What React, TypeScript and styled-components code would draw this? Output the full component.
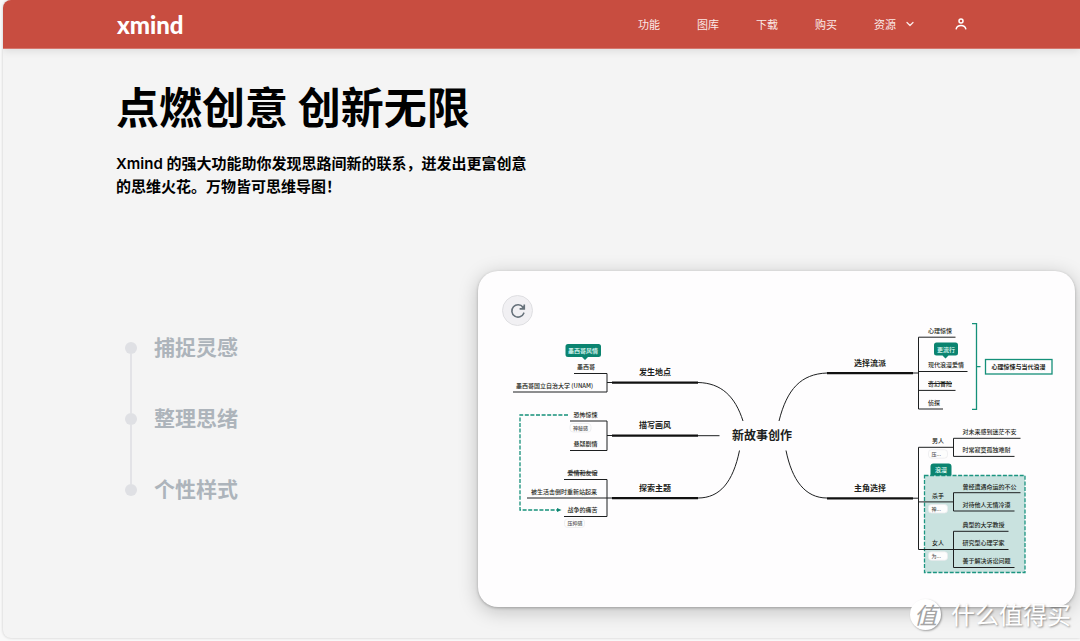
import React from "react";
import styled, { createGlobalStyle } from "styled-components";

const cjk = '"Noto Sans CJK SC", "Noto Sans", sans-serif';
const green = "#0b8470";
const ink = "#1d1f20";

const GlobalStyle = createGlobalStyle`
  *, *::before, *::after { box-sizing: border-box; }
  body {
    margin: 0;
    background: #f9f9f9;
    font-family: ${cjk};
    color: #000;
  }
`;

const Page = styled.div`
  display: flex;
  min-height: 100vh;
  padding: 0 0 3px 3px;
  overflow: hidden;
  position: relative;
`;

const Panel = styled.div`
  flex: 1;
  min-width: 0;
  display: flex;
  flex-direction: column;
  background: #f4f4f4;
  border-radius: 8px 0 0 8px;
  box-shadow: 0 0 3px rgba(0, 0, 0, 0.2);
  overflow: hidden;
`;

const Header = styled.header`
  display: flex;
  align-items: center;
  justify-content: space-between;
  height: 49px;
  padding: 0 113px;
  background: #c84d40;
  border-bottom: 1px solid #d5776d;
  box-shadow: 0 2px 8px rgba(0, 0, 0, 0.1);
`;

const Logo = styled.a`
  padding: 2px 0 0 1px;
  color: #fff;
  font: 900 24px/28px Lato, sans-serif;
  text-decoration: none;
`;

const Nav = styled.nav`
  display: flex;
  align-items: center;
  gap: 37px;
`;

const NavLink = styled.a`
  color: #fbe9e7;
  font-size: 11px;
  line-height: 16px;
  text-decoration: none;
`;

const NavMenu = styled.button`
  display: flex;
  align-items: center;
  gap: 10px;
  padding: 0;
  border: 0;
  background: none;
  color: #fbe9e7;
  font-family: inherit;
  font-size: 11px;
  line-height: 16px;
`;

const IconButton = styled.button`
  display: flex;
  padding: 0;
  margin-left: 4px;
  border: 0;
  background: none;
  color: #fff;
`;

const Main = styled.main`
  flex: 1;
  padding: 24px 5px 31px 113px;
`;

const Title = styled.h1`
  margin: 0;
  font-size: 43px;
  line-height: 64px;
  font-weight: 700;
`;

const Lead = styled.p`
  max-width: 424px;
  margin: 15px 0 0;
  font-family: Inter, ${cjk};
  font-size: 15px;
  line-height: 23px;
  font-weight: 600;
`;

const Showcase = styled.section`
  display: grid;
  grid-template-columns: 362px minmax(0, 1fr);
  margin-top: 73px;
`;

const Steps = styled.ol`
  margin: 61px 0 0;
  padding: 0 0 0 9px;
  list-style: none;
`;

const Step = styled.li`
  position: relative;
  display: flex;
  align-items: center;
  gap: 17px;
  height: 32px;
  margin-bottom: 39px;
  color: #adb4bb;
  font-size: 21px;
  line-height: 28px;
  font-weight: 700;

  &::before {
    content: "";
    width: 12px;
    height: 12px;
    border-radius: 50%;
    background: #dfe0e4;
  }

  &:not(:last-child)::after {
    content: "";
    position: absolute;
    left: 5px;
    top: 22px;
    width: 2px;
    height: 59px;
    background: #e3e3e7;
  }
`;

const StepName = styled.span`
  padding-bottom: 4px;
`;

const Card = styled.div`
  position: relative;
  border-radius: 20px;
  background: #fefdfe;
  box-shadow: 0 1px 3px rgba(0, 0, 0, 0.25), 0 4px 20px rgba(0, 0, 0, 0.22);
`;

const Replay = styled.button`
  position: absolute;
  left: 24px;
  top: 24px;
  display: grid;
  place-items: center;
  width: 31px;
  height: 31px;
  padding: 0;
  border: 1px solid #dfdfe2;
  border-radius: 50%;
  background: #f1f0f3;
  color: #66717a;
`;

const Map = styled.svg`
  display: block;
  width: 100%;
  height: auto;
`;

const Label = styled.text<{ $size?: number; $bold?: boolean; $color?: string }>`
  font-family: ${cjk};
  font-size: ${(p) => p.$size ?? 6}px;
  font-weight: ${(p) => (p.$bold ? 700 : 500)};
  fill: ${(p) => p.$color ?? ink};
`;

const Watermark = styled.div`
  position: absolute;
  right: 9px;
  bottom: 9px;
  display: flex;
  align-items: center;
  gap: 10px;
  color: #fff;
  font-size: 24px;
  line-height: 36px;
  text-shadow: 1px 1px 2px rgba(0, 0, 0, 0.4);
`;

const Seal = styled.span`
  display: grid;
  place-items: center;
  width: 31px;
  height: 31px;
  border-radius: 50%;
  background: #fff;
  box-shadow: 1px 1px 2px rgba(0, 0, 0, 0.35);
  color: #a4a4a4;
  font-size: 23px;
  line-height: 31px;
  font-style: italic;
  text-shadow: none;
`;

type Leaf = { text: string; x: number; y: number; strike?: boolean };

const branches = [
  { text: "发生地点", x: 639, y: 375 },
  { text: "描写画风", x: 639, y: 428 },
  { text: "探索主题", x: 639, y: 490.5 },
  { text: "选择流派", x: 854, y: 365.5 },
  { text: "主角选择", x: 854, y: 490.5 },
];

const leaves: Leaf[] = [
  { text: "墨西哥", x: 577, y: 368.5 },
  { text: "墨西哥国立自治大学 (UNAM)", x: 516, y: 387.5 },
  { text: "恐怖惊悚", x: 573.5, y: 416.5 },
  { text: "悬疑剧情", x: 573.5, y: 446 },
  { text: "爱情和友谊", x: 567.5, y: 475, strike: true },
  { text: "被生活击倒时重新站起来", x: 531, y: 493.5 },
  { text: "战争的痛苦", x: 567.5, y: 512.3 },
  { text: "心理惊悚", x: 928, y: 332.5 },
  { text: "现代浪漫爱情", x: 928, y: 367 },
  { text: "奇幻冒险", x: 928, y: 385.7, strike: true },
  { text: "侦探", x: 928, y: 404.5 },
  { text: "男人", x: 932, y: 442.8 },
  { text: "对未来感到迷茫不安", x: 962.5, y: 433.8 },
  { text: "时常寂寞孤独难耐", x: 962.5, y: 452 },
  { text: "杀手", x: 932, y: 497.5 },
  { text: "曾经遭遇命运的不公", x: 962.5, y: 488.6 },
  { text: "对待他人无情冷漠", x: 962.5, y: 506.8 },
  { text: "女人", x: 932, y: 545.2 },
  { text: "典型的大学教授", x: 962.5, y: 526.8 },
  { text: "研究型心理学家", x: 962.5, y: 545.2 },
  { text: "善于解决诉讼问题", x: 962.5, y: 563.4 },
];

const notes = [
  { text: "神秘感", x: 570, y: 423.5, w: 21 },
  { text: "压抑感", x: 564.5, y: 519, w: 20 },
  { text: "压...", x: 928.5, y: 449.7, w: 19 },
  { text: "神...", x: 928.5, y: 504.5, w: 19 },
  { text: "为...", x: 928.5, y: 551.8, w: 19 },
];

const MindMap = () => (
  <Map viewBox="478 271 597 336" role="img" aria-label="新故事创作">
    <rect x="924.5" y="475.5" width="100.5" height="97" fill="#c9e2df" stroke="#1c9581" strokeWidth="1.3" strokeDasharray="4 1.6" />
    <path d="M930.5 475.5v-9a3 3 0 0 1 3-3h15a3 3 0 0 1 3 3v9z" fill={green} />

    <g fill="none" stroke={ink} strokeWidth="1">
      <path d="M574 373.5H607V392H513M607 382.5H612" />
      <path d="M570 421H607V450.5H570M607 435.5H612" />
      <path d="M564 479.5H607V516.5H564M527 498H612" />
      <path d="M698 382.5C721 383 735 396 743 421M698 435.7H719.5M698 498C720 498 733 482 739.5 450.5" />
      <path d="M827 373C801 374 787 389 779 421M827 498C805 498 792 480 786 450.5" />
      <path d="M913 373H918.5M955.5 337.2H918.5V409H943M918.5 371.5H967.5M918.5 390.4H955.5" />
      <path d="M913 498.2H918.5M953.5 447.3H918.5V549.5H1008.5M918.5 501.9H953.5" />
      <path d="M1020.5 438.3H953.5V456.4H1014.5" />
      <path d="M1020.5 492.7H953.5V511H1014.5" />
      <path d="M1008.5 531.3H953.5V567.5H1014.5" />
    </g>
    <path d="M612 382.6H698M612 435.7H698M612 498.2H698M827 373.2H913M827 498.4H913" stroke="#111" strokeWidth="2.3" />

    <g fill="none" stroke="#159079" strokeWidth="1.3">
      <path d="M568 415H520V510H557" strokeDasharray="4 1.6" />
      <path d="M972 323.6H976.5V409.3H972M976.5 366.6H980.5" />
      <rect x="985.5" y="359.5" width="66.5" height="14.5" />
    </g>
    <path d="M557 508l4.5 2-4.5 2z" fill={green} />

    <path d="M568 344h30.5a2.5 2.5 0 0 1 2.5 2.5v8a2.5 2.5 0 0 1-2.5 2.5H588l-3 3-3-3h-14a2.5 2.5 0 0 1-2.5-2.5v-8a2.5 2.5 0 0 1 2.5-2.5z" fill={green} />
    <path d="M936.5 342.5H955.5a2.5 2.5 0 0 1 2.5 2.5v8a2.5 2.5 0 0 1-2.5 2.5H948.5l-3 3-3-3h-6a2.5 2.5 0 0 1-2.5-2.5v-8a2.5 2.5 0 0 1 2.5-2.5z" fill={green} />

    {notes.map((n) => (
      <g key={n.text}>
        <rect x={n.x} y={n.y} width={n.w} height="8.5" rx="3" fill="#fdfdfd" stroke="#ebebee" strokeWidth=".8" />
        <Label x={n.x + 3} y={n.y + 6} $size={5} $color="#555">{n.text}</Label>
      </g>
    ))}
    {leaves.map((l) => (
      <g key={l.text}>
        <Label x={l.x} y={l.y}>{l.text}</Label>
        {l.strike && <path d={`M${l.x} ${l.y - 2.2}h${l.text.length * 6}`} stroke={ink} strokeWidth="1" />}
      </g>
    ))}
    {branches.map((b) => (
      <Label key={b.text} x={b.x} y={b.y} $size={8} $bold>{b.text}</Label>
    ))}
    <Label x="732" y="440" $size={12} $bold>新故事创作</Label>
    <Label x="991.5" y="369" $bold>心理惊悚与当代浪漫</Label>
    <Label x="568" y="353" $color="#e6fffa">墨西哥风情</Label>
    <Label x="937" y="351.5" $color="#e6fffa">更流行</Label>
    <Label x="935" y="472" $color="#e6fffa">浪漫</Label>
  </Map>
);

export default function App() {
  return (
    <>
      <GlobalStyle />
      <Page>
        <Panel>
          <Header>
            <Logo href="#">xmind</Logo>
            <Nav>
              <NavLink href="#features">功能</NavLink>
              <NavLink href="#gallery">图库</NavLink>
              <NavLink href="#download">下载</NavLink>
              <NavLink href="#pricing">购买</NavLink>
              <NavMenu type="button">
                资源
                <svg width="8" height="6" viewBox="0 0 8 6" fill="none" stroke="currentColor" strokeWidth="1.3" strokeLinecap="round" strokeLinejoin="round">
                  <path d="M1 1.5l3 3 3-3" />
                </svg>
              </NavMenu>
              <IconButton type="button" aria-label="账户">
                <svg width="12" height="12" viewBox="0 0 12 12" fill="none" stroke="currentColor" strokeWidth="1.5" strokeLinecap="round">
                  <circle cx="6" cy="3" r="2" />
                  <path d="M1.2 10.8a4.9 4.2 0 0 1 9.6 0" />
                </svg>
              </IconButton>
            </Nav>
          </Header>
          <Main>
            <Title>点燃创意 创新无限</Title>
            <Lead>
              Xmind 的强大功能助你发现思路间新的联系，迸发出更富创意的思维火花。万物皆可思维导图！
            </Lead>
            <Showcase>
              <Steps>
                <Step><StepName>捕捉灵感</StepName></Step>
                <Step><StepName>整理思绪</StepName></Step>
                <Step><StepName>个性样式</StepName></Step>
              </Steps>
              <Card>
                <MindMap />
                <Replay type="button" aria-label="重播">
                  <svg width="16" height="16" viewBox="0 0 16 16" fill="none" stroke="currentColor" strokeWidth="1.6">
                    <path d="M13.8 10.2A6.2 6.2 0 1 1 13 4.2" strokeLinecap="round" />
                    <path d="M14.3 1.6v4.3H9.6" strokeLinejoin="miter" />
                    <path d="M14 2.5v3.2h-3.4z" fill="currentColor" stroke="none" />
                  </svg>
                </Replay>
              </Card>
            </Showcase>
          </Main>
        </Panel>
        <Watermark>
          <Seal>值</Seal>
          什么值得买
        </Watermark>
      </Page>
    </>
  );
}
